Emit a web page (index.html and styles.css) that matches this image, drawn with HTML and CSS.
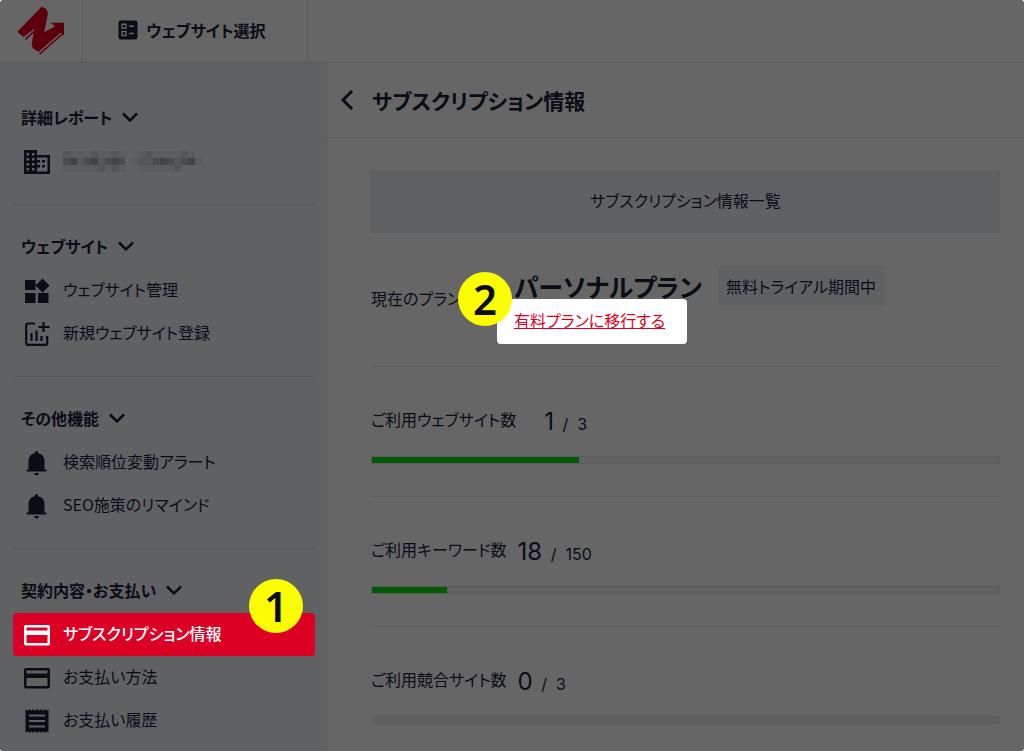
FILE: index.html
```
<!DOCTYPE html>
<html lang="ja">
<head>
    <meta charset="UTF-8">
    <meta name="viewport" content="width=device-width, initial-scale=1.0">
    <title>サブスクリプション情報</title>
    <link rel="stylesheet" href="styles.css">
</head>
<body>
    <div class="app">
        <header class="topbar">
            <a href="#" class="logo" aria-label="ホーム">
                <svg width="64" height="56" viewBox="27 10 192 168">
                    <path fill="#5c000e" d="M52 96 125 21 138 27 144 39 133 98 165 80 151 69H192V108L183 99 116 157 98 145 95 133 103 88 70 112Z"/>
                    <path stroke="#5c000e" stroke-width="5" d="M76 119 103 94M119 163 187 103"/>
                    <path stroke="#666" stroke-width="3" d="M72 115 101 90M116 159 183 100"/>
                </svg>
            </a>
            <button class="site-select">
                <svg width="20" height="20" viewBox="0 0 20 20">
                    <rect x="0.500" y="0.500" width="19" height="19" rx="2" fill="#0a0c16"/>
                    <path fill="none" stroke="#666" stroke-width="1.4" d="M4 4.2h4v4H4zM4 11.500h4v4H4zM11 6.200h5M11 13.500h5"/>
                </svg>
                ウェブサイト選択
            </button>
        </header>

        <div class="layout">
            <nav class="sidebar">
                <section class="menu">
                    <button class="menu-title">詳細レポート<svg class="chevron" viewBox="0 0 16 10"><path d="M1 1.500 8 8.500 15 1.500"/></svg></button>
                    <a href="#" class="menu-item" aria-label="サイト">
                        <svg class="icon" viewBox="0 0 26 24">
                            <path fill-rule="evenodd" d="M0 0H13V5H26V24H0ZM2.500 3v2.500H5V3ZM8 3v2.500h2.500V3ZM2.500 8v2.500H5V8ZM8 8v2.500h2.500V8ZM2.500 13v2.500H5V13ZM8 13v2.500h2.500V13ZM2.500 18v2.500H5V18ZM8 18v2.500h2.500V18ZM13 7.500V10h3v2.500h-3V15h3v2.500h-3V21.500H23.500V7.500ZM18 10h3v2.500h-3ZM18 15h3v2.500h-3Z"/>
                        </svg>
                        <svg class="mosaic" width="139" height="21" viewBox="0 0 139 21">
                            <path fill="#54575a" d="M0 0h7v7H0zM28 0h7v7h-7zM49 0h7v7h-7zM83 0h7v7h-7zM118 0h7v7h-7zM7 7h55v7H7zM76 7h56v7H76zM35 14h7v7h-7zM49 14h7v7h-7zM111 14h7v7h-7z"/>
                            <path fill="#5a5c5e" d="M7 0h21v7H7zM35 0h14v7H35zM56 0h6v7h-6zM76 0h7v7h-7zM90 0h28v7H90zM125 0h7v7h-7zM69 7h7v7h-7zM132 7h7v7h-7zM0 14h35v7H0zM42 14h7v7h-7zM56 14h6v7h-6zM76 14h35v7H76z"/>
                            <path fill="#404447" d="M7 7h7v7H7zM28 7h7v7h-7zM49 7h7v7h-7zM97 7h7v7h-7zM125 7h7v7h-7z"/>
                            <path fill="#4a4d50" d="M0 7h7v7H0zM21 7h7v7h-7zM42 7h7v7h-7zM56 7h6v7h-6zM90 7h7v7h-7zM104 7h7v7h-7zM118 7h7v7h-7z"/>
                        </svg>
                    </a>
                </section>

                <section class="menu">
                    <button class="menu-title">ウェブサイト<svg class="chevron" viewBox="0 0 16 10"><path d="M1 1.500 8 8.500 15 1.500"/></svg></button>
                    <a href="#" class="menu-item">
                        <svg class="icon" viewBox="0 0 26 24"><path d="M1 1h10.500v10H1zM1 14h10.500v10H1zM14 14h10.500v10H14zM18.500-.5 25.500 6.500 18.500 13.500 11.500 6.500z"/></svg>
                        <span class="menu-text">ウェブサイト管理</span>
                    </a>
                    <a href="#" class="menu-item">
                        <svg class="icon" viewBox="0 0 26 24">
                            <path fill="none" stroke="currentColor" stroke-width="2.200" d="M11 1.500H4Q2.200 1.500 2.200 3.500V21Q2.200 22.800 4 22.800H21.500Q23.200 22.800 23.200 21V14M19.500 0V10M14.500 5H25.500M7.500 11V19M12.500 8.500V19M17.500 14V19"/>
                        </svg>
                        <span class="menu-text">新規ウェブサイト登録</span>
                    </a>
                </section>

                <section class="menu">
                    <button class="menu-title">その他機能<svg class="chevron" viewBox="0 0 16 10"><path d="M1 1.500 8 8.500 15 1.500"/></svg></button>
                    <a href="#" class="menu-item">
                        <svg class="icon" viewBox="0 0 26 24"><path d="M2.500 20.500V18.500H4.500V10C4.500 5.500 7.500 2.800 11 2V1.500Q11 0 12.500 0T14 1.500V2C17.500 2.800 20.500 5.500 20.500 10V18.500H22.500V20.500ZM10 22H15Q14.500 24.500 12.500 24.500T10 22Z"/></svg>
                        <span class="menu-text">検索順位変動アラート</span>
                    </a>
                    <a href="#" class="menu-item">
                        <svg class="icon" viewBox="0 0 26 24"><path d="M2.500 20.500V18.500H4.500V10C4.500 5.500 7.500 2.800 11 2V1.500Q11 0 12.500 0T14 1.500V2C17.500 2.800 20.500 5.500 20.500 10V18.500H22.500V20.500ZM10 22H15Q14.500 24.500 12.500 24.500T10 22Z"/></svg>
                        <span class="menu-text">SEO施策のリマインド</span>
                    </a>
                </section>

                <section class="menu">
                    <button class="menu-title">契約内容・お支払い<svg class="chevron" viewBox="0 0 16 10"><path d="M1 1.500 8 8.500 15 1.500"/></svg></button>
                    <a href="#" class="menu-item active">
                        <svg class="icon" viewBox="0 0 26 24"><path fill-rule="evenodd" d="M2 2H24Q26 2 26 4V20.500Q26 22.500 24 22.500H2Q0 22.500 0 20.500V4Q0 2 2 2ZM2.500 4.500V7.500H23.500V4.500ZM2.500 12V20H23.500V12Z"/></svg>
                        <span class="menu-text">サブスクリプション情報</span>
                        <span class="step step-one">1</span>
                    </a>
                    <a href="#" class="menu-item">
                        <svg class="icon" viewBox="0 0 26 24"><path fill-rule="evenodd" d="M2 2H24Q26 2 26 4V20.500Q26 22.500 24 22.500H2Q0 22.500 0 20.500V4Q0 2 2 2ZM2.500 4.500V7.500H23.500V4.500ZM2.500 12V20H23.500V12Z"/></svg>
                        <span class="menu-text">お支払い方法</span>
                    </a>
                    <a href="#" class="menu-item">
                        <svg class="icon" viewBox="0 0 26 24"><path fill-rule="evenodd" d="M1.500 0 3.500 1.800 5.500 0 7.500 1.800 9.300 0 11.200 1.800 13 0 15 1.800 17 0 19 1.800 20.800 0 22.500 1.800 24.500 0V24L22.500 22.200 20.800 24 19 22.200 17 24 15 22.200 13 24 11.200 22.200 9.300 24 7.500 22.200 5.500 24 3.500 22.200 1.500 24ZM5 5.500V7.500H21V5.500ZM5 11V13H21V11ZM5 16.500V18.500H21V16.500Z"/></svg>
                        <span class="menu-text">お支払い履歴</span>
                    </a>
                </section>
            </nav>

            <main class="main">
                <div class="page-header">
                    <a href="#" class="back" aria-label="戻る">
                        <svg width="14" height="22" viewBox="0 0 14 22"><path fill="none" stroke="#0a0c16" stroke-width="3" d="M12 2 3 11 12 20"/></svg>
                    </a>
                    <h1>サブスクリプション情報</h1>
                </div>

                <div class="content">
                    <h2 class="list-title">サブスクリプション情報一覧</h2>

                    <div class="plan">
                        <span class="plan-label">現在のプラン</span>
                        <div class="plan-body">
                            <div class="plan-row">
                                <strong class="plan-name">パーソナルプラン</strong>
                                <span class="tag">無料トライアル期間中</span>
                            </div>
                            <a href="#" class="upgrade"><span>有料プランに移行する</span></a>
                            <span class="step step-two">2</span>
                        </div>
                    </div>

                    <div class="usage">
                        <div class="usage-text usage-text-wide">
                            <span class="usage-label">ご利用ウェブサイト数</span>
                            <span class="count"><b>1</b> / &nbsp;3</span>
                        </div>
                        <div class="bar"><div class="bar-fill" style="width: 33%"></div></div>
                    </div>
                    <div class="usage">
                        <div class="usage-text">
                            <span class="usage-label">ご利用キーワード数</span>
                            <span class="count"><b>18</b> / &nbsp;150</span>
                        </div>
                        <div class="bar"><div class="bar-fill" style="width: 12%"></div></div>
                    </div>
                    <div class="usage">
                        <div class="usage-text">
                            <span class="usage-label">ご利用競合サイト数</span>
                            <span class="count"><b>0</b> / &nbsp;3</span>
                        </div>
                        <div class="bar"><div class="bar-fill" style="width: 0%"></div></div>
                    </div>
                </div>
            </main>
        </div>
    </div>
</body>
</html>
```
FILE: styles.css
```
* {
    box-sizing: border-box;
}
body {
    margin: 0;
    background-color: #fff;
    color: #0a0c16;
    font-family: "Noto Sans CJK JP", sans-serif;
    font-size: 16px;
    line-height: 24px;
    font-feature-settings: "palt";
}
h1, h2 {
    margin: 0;
}
a {
    color: inherit;
    text-decoration: none;
}
button {
    padding: 0;
    border: none;
    background: none;
    color: inherit;
    font: inherit;
    font-feature-settings: inherit;
    font-weight: bold;
    cursor: pointer;
}
.app {
    display: flex;
    flex-direction: column;
    min-height: 100vh;
    background-color: #666;
    border-radius: 3px;
    overflow: hidden;
}

/* top bar */
.topbar {
    display: flex;
    height: 63px;
    border-bottom: 1px solid #5a5c5e;
}
.logo {
    display: flex;
    align-items: center;
    justify-content: center;
    width: 83px;
    border-right: 1px solid #5a5c5e;
}
.site-select {
    display: flex;
    align-items: center;
    justify-content: center;
    gap: 8px;
    width: 225px;
    padding: 0 6px 2px 0;
    border-right: 1px solid #5a5c5e;
}
.layout {
    display: flex;
    flex: 1;
}

/* sidebar */
.sidebar {
    flex: none;
    width: 327px;
    padding: 13px 12px 8px 13px;
    background-color: #606163;
}
.menu {
    padding: 21px 0;
    border-bottom: 1px solid #56585a;
}
.menu:last-child {
    padding-bottom: 0;
    border-bottom: none;
}
.menu-title {
    display: flex;
    align-items: center;
    gap: 10px;
    height: 43px;
    padding: 0 0 4px 8px;
}
.chevron {
    width: 16px;
    height: 10px;
    fill: none;
    stroke: currentColor;
    stroke-width: 2.5;
}
.menu-item {
    position: relative;
    display: flex;
    align-items: center;
    gap: 13px;
    height: 43px;
    padding-left: 11px;
    border-radius: 4px;
}
.menu-item.active {
    background-color: #dc0024;
    color: #fff;
    font-weight: 500;
}
.menu-text {
    padding-bottom: 4px;
}
.icon {
    width: 26px;
    height: 24px;
    fill: currentColor;
    overflow: visible;
}

/* numbered markers */
.step {
    position: absolute;
    z-index: 2;
    width: 54px;
    height: 54px;
    border-radius: 50%;
    background-color: #fcfc03;
    color: #0a0c16;
    font-family: "Noto Sans", sans-serif;
    font-size: 42px;
    font-weight: 600;
    line-height: 54px;
    text-align: center;
}
.step-one {
    top: -34px;
    right: 12px;
}
.step-two {
    top: 6px;
    left: -56px;
}

/* main */
.main {
    flex: 1;
    min-width: 0;
}
.page-header {
    display: flex;
    align-items: center;
    gap: 18px;
    height: 75px;
    padding-left: 13px;
    border-bottom: 1px solid #5a5c5e;
}
.back {
    display: flex;
}
.page-header h1 {
    font-size: 21px;
}
.content {
    padding: 33px 24px 0 44px;
}
.list-title {
    padding: 16px 18px 20px;
    border: 1px solid #5a5c5e;
    background-color: #606163;
    font-size: 16px;
    font-weight: normal;
    text-align: center;
}
.plan {
    display: flex;
    align-items: center;
    padding: 33px 0 32px;
    border-bottom: 1px solid #5c5c5d;
}
.plan-label {
    flex: none;
    width: 143px;
    padding-bottom: 4px;
}
.plan-body {
    position: relative;
}
.plan-row {
    display: flex;
    align-items: center;
    gap: 16px;
}
.plan-name {
    font-size: 25px;
    line-height: 40px;
}
.tag {
    padding: 8px;
    border-radius: 4px;
    background-color: #606163;
}
.upgrade {
    position: relative;
    display: inline-block;
    color: #dc0024;
    line-height: 28px;
    vertical-align: top;
    text-decoration: underline;
}
.upgrade::before {
    content: "";
    position: absolute;
    inset: -7px -22px -10px -17px;
    border-radius: 4px;
    background-color: #fff;
}
.upgrade span {
    position: relative;
}
.usage {
    padding: 36px 0 32px;
    border-bottom: 1px solid #5c5c5d;
}
.usage:last-child {
    padding-bottom: 24px;
    border-bottom: none;
}
.usage-text {
    display: flex;
    align-items: center;
    gap: 11px;
    height: 36px;
    margin-bottom: 17px;
}
.usage-text-wide {
    gap: 28px;
}
.usage-label {
    padding-bottom: 4px;
}
.count {
    padding-top: 4px;
    font-family: Inter, sans-serif;
    line-height: 36px;
}
.count b {
    margin-right: 4px;
    font-size: 24px;
    font-weight: normal;
}
.bar {
    height: 8px;
    border: 1px solid #5a5c5e;
    background-color: #606163;
}
.bar-fill {
    height: 100%;
    background-color: #045a04;
}
```
